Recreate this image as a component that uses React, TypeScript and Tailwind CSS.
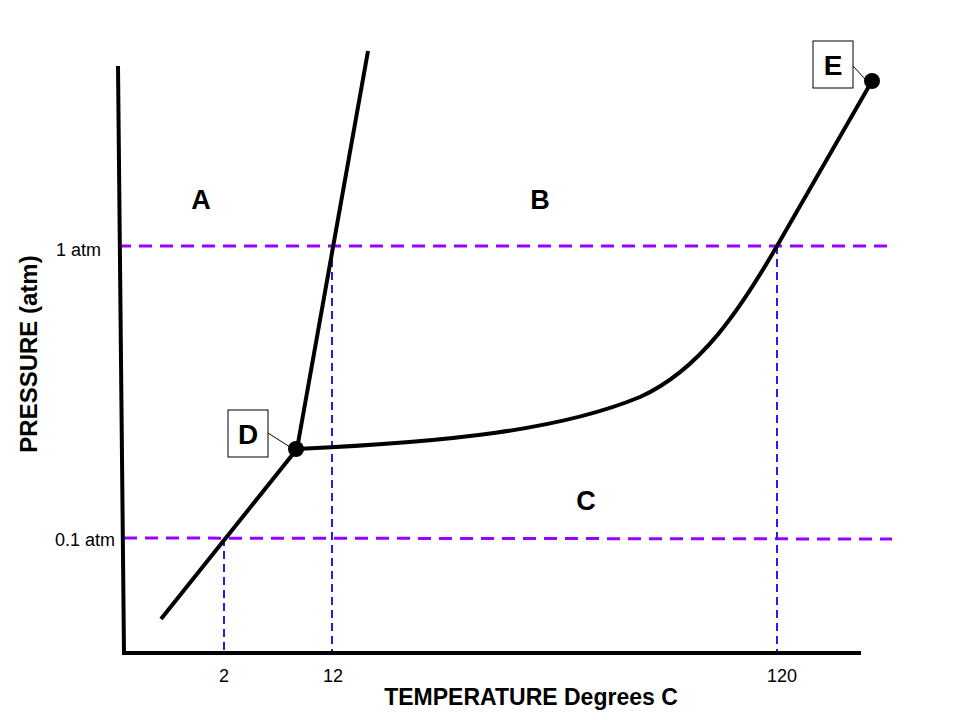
import React from "react";

const font = '"Liberation Sans", Arial, sans-serif';

function LabelBox({ x, y, letter }: { x: number; y: number; letter: string }) {
  return (
    <g>
      <rect x={x} y={y} width={40} height={47} fill="#ffffff" stroke="#000000" strokeWidth={1} />
      <text
        x={x + 20}
        y={y + 34}
        textAnchor="middle"
        fontFamily={font}
        fontWeight="bold"
        fontSize={28}
        fill="#000000"
      >
        {letter}
      </text>
    </g>
  );
}

export default function App() {
  return (
    <div className="w-[960px] h-[720px] bg-white overflow-hidden">
      <svg width="960" height="720" viewBox="0 0 960 720" className="block">
        {/* reference lines */}
        <g fill="none">
          <line x1="118" y1="246" x2="888" y2="246" stroke="#9900ff" strokeWidth={3} strokeDasharray="13 8" />
          <line x1="124" y1="538" x2="892" y2="539" stroke="#9900ff" strokeWidth={3} strokeDasharray="13 8" />
          <line x1="224" y1="538" x2="224" y2="653" stroke="#1f1fee" strokeWidth={2} strokeDasharray="8 5" />
          <line x1="332" y1="246" x2="332" y2="653" stroke="#1f1fee" strokeWidth={2} strokeDasharray="8 5" />
          <line x1="777" y1="246" x2="777" y2="653" stroke="#1f1fee" strokeWidth={2} strokeDasharray="8 5" />
        </g>

        {/* axes */}
        <polyline points="118,66 124,653 861,653" fill="none" stroke="#000000" strokeWidth={4} />

        {/* phase boundaries */}
        <g fill="none" stroke="#000000" strokeWidth={4} strokeLinecap="butt">
          <line x1="368" y1="51" x2="297" y2="449" />
          <line x1="161" y1="619" x2="297" y2="449" />
          <path d="M296 449 C 450 442 560 430 640 397 C 700 370 740 310 777 246 L 872 81" />
        </g>

        {/* points */}
        <circle cx="296" cy="449" r="8" fill="#000000" />
        <circle cx="872" cy="81" r="8" fill="#000000" />

        {/* callouts */}
        <line x1="268" y1="433" x2="290" y2="447" stroke="#000000" strokeWidth={1} />
        <line x1="853" y1="66" x2="866" y2="80" stroke="#000000" strokeWidth={1} />
        <LabelBox x={228} y={410} letter="D" />
        <LabelBox x={813} y={41} letter="E" />

        {/* region letters */}
        <g fontFamily={font} fontWeight="bold" fontSize={27} fill="#000000" textAnchor="middle">
          <text x="201" y="209">A</text>
          <text x="540" y="209">B</text>
          <text x="586" y="510">C</text>
        </g>

        {/* tick labels */}
        <g fontFamily={font} fontSize={18} fill="#000000">
          <text x="101" y="256" textAnchor="end">1 atm</text>
          <text x="115" y="546" textAnchor="end">0.1 atm</text>
          <text x="224" y="682" textAnchor="middle">2</text>
          <text x="333" y="682" textAnchor="middle">12</text>
          <text x="782" y="682" textAnchor="middle">120</text>
        </g>

        {/* axis titles */}
        <text
          x="531"
          y="705"
          textAnchor="middle"
          fontFamily={font}
          fontWeight="bold"
          fontSize={23}
          fill="#000000"
        >
          TEMPERATURE Degrees C
        </text>
        <text
          x="0"
          y="0"
          transform="translate(37 354) rotate(-90)"
          textAnchor="middle"
          fontFamily={font}
          fontWeight="bold"
          fontSize={24}
          fill="#000000"
        >
          PRESSURE (atm)
        </text>
      </svg>
    </div>
  );
}
